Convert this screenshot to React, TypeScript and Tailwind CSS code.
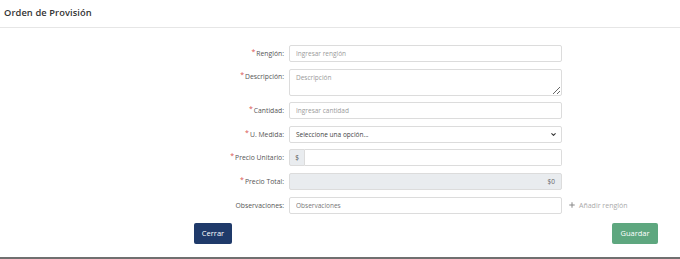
import { ChevronDown, Plus } from "lucide-react";

const font = { fontFamily: '"Open Sans", "Liberation Sans", sans-serif' };

function Label({ text, required, top }: { text: string; required?: boolean; top?: boolean }) {
  return (
    <div
      className={
        "text-right text-[6.8px] leading-[9px] text-[#555] whitespace-nowrap" +
        (top ? " self-start pt-[3px]" : "")
      }
    >
      {required && (
        <span className="text-[#d9534f] text-[7px] relative -top-[2px] mr-[1px]">*</span>
      )}
      {text}
    </div>
  );
}

const inputCls =
  "h-[17px] border border-[#dcdcdc] rounded-[2px] px-[6px] text-[6.5px] leading-[9px] text-[#555] placeholder:text-[#9a9a9a] outline-none";

export default function App() {
  return (
    <div style={font} className="w-[680px] h-[259px] bg-white flex flex-col overflow-hidden">
      <div className="h-[28px] shrink-0 border-b border-[#e6e6e6] flex items-center pl-[4px] pb-[1px]">
        <h1 className="text-[9.3px] leading-[12px] font-semibold text-[#333] tracking-[0.1px]">
          Orden de Provisión
        </h1>
      </div>

      <form className="pt-[17px] flex flex-col shrink-0">
        <div className="grid grid-cols-[284px_273px_1fr] gap-x-[5px] gap-y-[6.6px] items-center leading-[9px] text-[7px]">
          <Label text="Renglón:" required />
          <input placeholder="Ingresar renglón" className={inputCls} />
          <div />

          <Label text="Descripción:" required top />
          <textarea
            placeholder="Descripción"
            className="h-[27px] border border-[#dcdcdc] rounded-[2px] px-[6px] pt-[3px] text-[6.5px] text-[#555] placeholder:text-[#9a9a9a] outline-none resize-y leading-[9px] block"
          />
          <div />

          <Label text="Cantidad:" required />
          <input placeholder="Ingresar cantidad" className={inputCls} />
          <div />

          <Label text="U. Medida:" required />
          <div className="h-[17px] border border-[#dcdcdc] rounded-[2px] pl-[6px] pr-[4px] flex items-center justify-between">
            <span className="text-[6.5px] text-[#444]">Seleccione una opción...</span>
            <ChevronDown className="w-[7px] h-[7px] text-[#333]" strokeWidth={3.5} />
          </div>
          <div />

          <Label text="Precio Unitario:" required />
          <div className="h-[17px] flex">
            <span className="w-[16px] bg-[#e9ecef] border border-[#dcdcdc] rounded-l-[2px] flex items-center justify-center text-[6.5px] text-[#555]">
              $
            </span>
            <input className="flex-1 min-w-0 border border-l-0 border-[#dcdcdc] rounded-r-[2px] px-[6px] text-[6.5px] outline-none" />
          </div>
          <div />

          <Label text="Precio Total:" required />
          <div className="h-[17px] bg-[#e9ecef] border border-[#dcdcdc] rounded-[2px] px-[6px] flex items-center justify-end">
            <span className="text-[6.5px] text-[#666]">$0</span>
          </div>
          <div />

          <Label text="Observaciones:" />
          <input placeholder="Observaciones" className={inputCls + " placeholder:text-[#777]"} />
          <div className="flex items-center gap-[3px] pl-[1px]">
            <Plus className="w-[8px] h-[8px] text-[#888]" strokeWidth={3} />
            <span className="text-[7px] text-[#aaa]">Añadir renglón</span>
          </div>
        </div>

        <div className="ml-[194px] w-[464px] mt-[9.5px] flex justify-between">
          <button
            type="button"
            className="h-[21px] w-[38px] bg-[#1f3a6a] rounded-[2px] text-white text-[7.5px]"
          >
            Cerrar
          </button>
          <button
            type="submit"
            className="h-[21px] w-[46px] bg-[#5ea77f] rounded-[2px] text-white text-[7.5px]"
          >
            Guardar
          </button>
        </div>
      </form>

      <div className="mt-auto h-[2px] shrink-0 bg-[#707070]" />
    </div>
  );
}
